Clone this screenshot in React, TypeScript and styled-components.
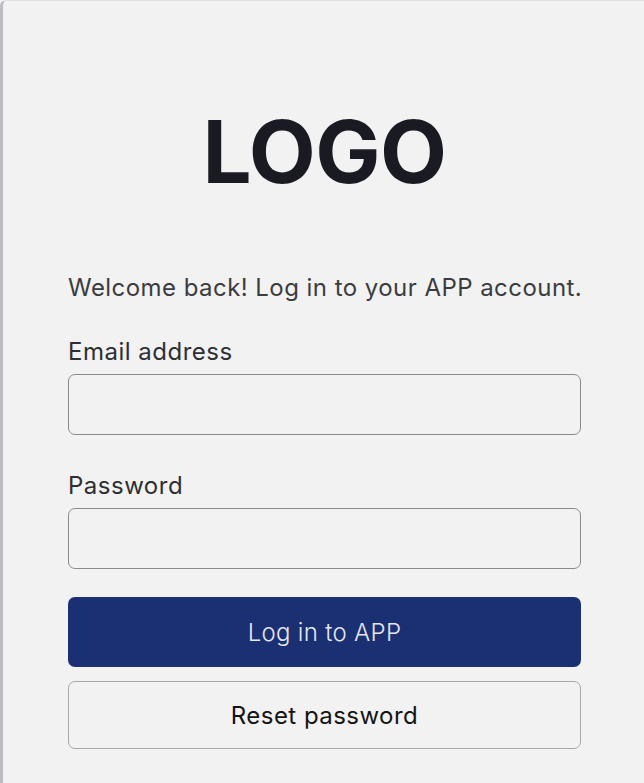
import React from "react";
import styled, { createGlobalStyle } from "styled-components";

const Global = createGlobalStyle`
  html, body { margin: 0; padding: 0; background: #f2f2f2; }
  body { font-family: Inter, "Noto Sans", sans-serif; }
  * { box-sizing: border-box; }
`;

const Frame = styled.div`
  width: 644px;
  height: 783px;
  background: #f2f2f2;
  border-left: 3px solid #bcbcc2;
  border-top: 1px solid #e2e2e4;
  border-top-left-radius: 6px;
  padding: 0 0 0 65px;
`;

const Column = styled.div`
  width: 513px;
  display: flex;
  flex-direction: column;
`;

const Logo = styled.h1`
  margin: 107px 0 0;
  font-size: 87px;
  line-height: 1;
  font-weight: 700;
  color: #1a1b22;
  text-align: center;
  letter-spacing: -0.5px;
`;

const Welcome = styled.p`
  margin: 79px 0 0;
  font-size: 24px;
  line-height: 28px;
  letter-spacing: 0.45px;
  color: #3b3c40;
  white-space: nowrap;
`;

const Label = styled.label<{ $top: number }>`
  margin-top: ${(p) => p.$top}px;
  font-size: 24px;
  line-height: 28px;
  letter-spacing: 0.5px;
  color: #2e2f33;
`;

const Input = styled.input`
  margin-top: 8px;
  height: 61px;
  width: 100%;
  background: #f2f2f2;
  border: 1.5px solid #8a8a8e;
  border-radius: 7px;
  font-size: 20px;
  padding: 0 14px;
`;

const Button = styled.button<{ $primary?: boolean; $top: number }>`
  margin-top: ${(p) => p.$top}px;
  height: ${(p) => (p.$primary ? 70 : 68)}px;
  width: 100%;
  border-radius: 7px;
  font-family: Inter, "Noto Sans", sans-serif;
  font-size: 24px;
  letter-spacing: ${(p) => (p.$primary ? 0.3 : 0.45)}px;
  cursor: pointer;
  background: ${(p) => (p.$primary ? "#1b2f73" : "#f2f2f2")};
  color: ${(p) => (p.$primary ? "#e6e8f2" : "#141414")};
  font-weight: ${(p) => (p.$primary ? 300 : 400)};
  border: ${(p) => (p.$primary ? "none" : "1.5px solid #a8a8ac")};
`;

export default function App() {
  return (
    <>
      <Global />
      <Frame>
        <Column>
          <Logo>LOGO</Logo>
          <Welcome>Welcome back! Log in to your APP account.</Welcome>
          <Label $top={36}>Email address</Label>
          <Input type="email" />
          <Label $top={37}>Password</Label>
          <Input type="password" />
          <Button $primary $top={28}>Log in to APP</Button>
          <Button $top={14}>Reset password</Button>
        </Column>
      </Frame>
    </>
  );
}
